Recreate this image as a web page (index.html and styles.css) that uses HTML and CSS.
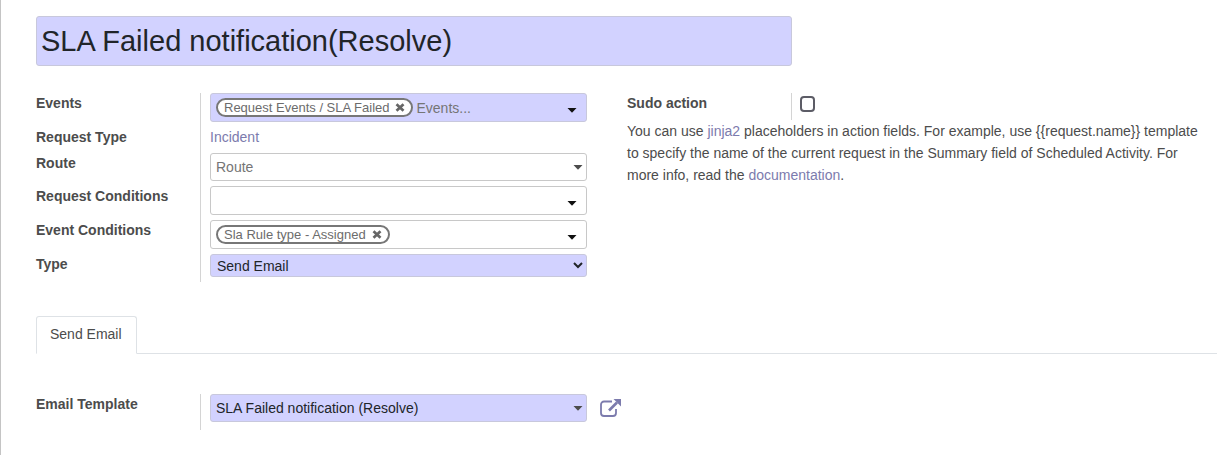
FILE: index.html
```html
<!DOCTYPE html>
<html lang="en">
<head>
  <meta charset="UTF-8" />
  <meta name="viewport" content="width=device-width, initial-scale=1.0" />
  <title>SLA Failed notification(Resolve)</title>
  <link rel="stylesheet" href="styles.css">
</head>
<body>
  <form class="sheet">
    <input type="text" class="title" aria-label="Name" value="SLA Failed notification(Resolve)" />

    <div class="groups">
      <div class="group">
        <div class="row">
          <label for="events">Events</label>
          <div class="cell">
            <div class="field tags required">
              <span class="tag">Request Events / SLA Failed
                <button type="button" aria-label="Remove"><svg width="10" height="9" viewBox="0 0 10 9"><path d="M1.500 1.200l7 6.600M8.500 1.200l-7 6.600" stroke="#666" stroke-width="2.700" /></svg></button>
              </span>
              <input type="text" id="events" placeholder="Events..." />
              <svg class="caret" width="10" height="5" viewBox="0 0 10 5"><path d="M0.5 0h9L5 4.8z" /></svg>
            </div>
          </div>
        </div>
        <div class="row">
          <span class="label">Request Type</span>
          <div class="cell"><a href="#">Incident</a></div>
        </div>
        <div class="row">
          <label for="route">Route</label>
          <div class="cell">
            <div class="field">
              <input type="text" id="route" placeholder="Route" />
              <svg class="caret" width="10" height="5" viewBox="0 0 10 5"><path d="M0.5 0h9L5 4.8z" /></svg>
            </div>
          </div>
        </div>
        <div class="row">
          <label for="reqcond">Request Conditions</label>
          <div class="cell">
            <div class="field tags">
              <input type="text" id="reqcond" />
              <svg class="caret" width="10" height="5" viewBox="0 0 10 5"><path d="M0.5 0h9L5 4.8z" /></svg>
            </div>
          </div>
        </div>
        <div class="row">
          <label for="evcond">Event Conditions</label>
          <div class="cell">
            <div class="field tags">
              <span class="tag">Sla Rule type - Assigned
                <button type="button" aria-label="Remove"><svg width="10" height="9" viewBox="0 0 10 9"><path d="M1.500 1.200l7 6.600M8.500 1.200l-7 6.600" stroke="#666" stroke-width="2.700" /></svg></button>
              </span>
              <input type="text" id="evcond" />
              <svg class="caret" width="10" height="5" viewBox="0 0 10 5"><path d="M0.5 0h9L5 4.8z" /></svg>
            </div>
          </div>
        </div>
        <div class="row">
          <label for="type">Type</label>
          <div class="cell">
            <select id="type" class="required">
              <option>Send Email</option>
            </select>
          </div>
        </div>
      </div>

      <div class="group">
        <div class="row">
          <label for="sudo">Sudo action</label>
          <div class="cell check"><input type="checkbox" id="sudo" /></div>
        </div>
        <p class="help">You can use <a href="#">jinja2</a> placeholders in action fields. For example, use {{request.name}} template to specify the name of the current request in the Summary field of Scheduled Activity. For more info, read the <a href="#">documentation</a>.</p>
      </div>
    </div>

    <nav class="tabs">
      <a href="#" class="tab">Send Email</a>
    </nav>

    <div class="groups">
      <div class="group">
        <div class="row template">
          <label for="template">Email Template</label>
          <div class="cell">
            <div class="field required">
              <input type="text" id="template" value="SLA Failed notification (Resolve)" />
              <svg class="caret" width="10" height="5" viewBox="0 0 10 5"><path d="M0.5 0h9L5 4.8z" /></svg>
            </div>
          </div>
        </div>
      </div>
      <div class="group">
        <button type="button" class="external" aria-label="External link">
          <svg width="22" height="20" viewBox="0 0 22 20">
            <path d="M12 3.5H4A3 3 0 0 0 1 6.500V15a3 3 0 0 0 3 3h9a3 3 0 0 0 3-3v-4" fill="none" stroke="#7c7bad" stroke-width="1.800" />
            <path d="M9 12.500l8-8" stroke="#7c7bad" stroke-width="2.600" />
            <path d="M13.500 1H21v7.500z" fill="#7c7bad" />
          </svg>
        </button>
      </div>
    </div>
  </form>
</body>
</html>
```
FILE: styles.css
```css
* {
  box-sizing: border-box;
}
body {
  margin: 0;
  background-color: #ffffff;
  color: #4c4c4c;
  font-family: "Liberation Sans", Arial, sans-serif;
  font-size: 14px;
  line-height: 21px;
}
input, select, button {
  font-family: inherit;
  font-size: inherit;
  color: #212529;
}
input::placeholder {
  color: #757575;
}
a {
  color: #7c7bad;
  text-decoration: none;
}
.sheet {
  min-height: 100vh;
  padding: 16px 0 0 35px;
  border-left: 1px solid #c4c4c4;
}
.title {
  display: block;
  width: 64%;
  height: 50px;
  padding: 0 4px;
  border: 1px solid #c8c8dc;
  border-radius: 3px;
  background-color: #d2d2ff;
  font-size: 29px;
}
.groups {
  display: flex;
  gap: 40px;
  margin-top: 27px;
}
.group {
  flex: 1;
  min-width: 0;
}
.group:first-child {
  flex: 0 0 551px;
}
.row {
  display: flex;
}
.row label, .row .label {
  flex: 0 0 164px;
  font-weight: bold;
}
.cell {
  flex: 1;
  min-width: 0;
  padding: 0 0 5px 9px;
  border-left: 1px solid #d4d4d4;
}
.cell > a {
  display: block;
}
.field {
  display: flex;
  align-items: center;
  height: 28px;
  padding: 0 3px 0 5px;
  border: 1px solid #c8c8c8;
  border-radius: 3px;
}
.field input {
  flex: 1;
  min-width: 0;
  padding: 0;
  border: none;
  outline: none;
  background: transparent;
}
.tags {
  gap: 3px;
  height: 29px;
  padding-right: 9px;
}
.tags .caret {
  margin-top: 5px;
  fill: #111111;
}
.caret {
  fill: #4c4c4c;
}
.tag {
  display: flex;
  align-items: center;
  gap: 6px;
  height: 19px;
  padding: 0 6px;
  border: 2px solid #777777;
  border-radius: 10px;
  background-color: #ffffff;
  color: #6c6c6c;
  font-size: 13px;
  line-height: 15px;
}
.tag button {
  display: flex;
  padding: 0;
  border: none;
  background: none;
  cursor: pointer;
}
.required {
  border-color: #c8c8dc;
  background-color: #d2d2ff;
}
select {
  display: block;
  width: 100%;
  height: 23px;
  padding: 0 2px;
  border: 1px solid #c8c8c8;
  border-radius: 3px;
}
.cell.check {
  padding-left: 8px;
}
input[type="checkbox"] {
  display: block;
  width: 15px;
  height: 16px;
  margin: 3px 0;
  appearance: none;
  border: 2px solid #5c5c66;
  border-radius: 4px;
  background-color: #ffffff;
}
.help {
  margin: 0;
  padding-right: 6px;
  line-height: 22px;
}
.tabs {
  display: flex;
  margin-top: 34px;
  border-bottom: 1px solid #dee2e6;
}
.tab {
  margin-bottom: -1px;
  padding: 7px 14px 8px 13px;
  border: 1px solid #dee2e6;
  border-bottom-color: #ffffff;
  border-radius: 3px 3px 0 0;
  color: #4c4c4c;
}
.tabs + .groups {
  gap: 13px;
  margin-top: 40px;
}
.template .cell {
  padding-bottom: 8px;
}
.external {
  display: block;
  margin-top: 4px;
  padding: 0;
  border: none;
  background: none;
  cursor: pointer;
}
```
